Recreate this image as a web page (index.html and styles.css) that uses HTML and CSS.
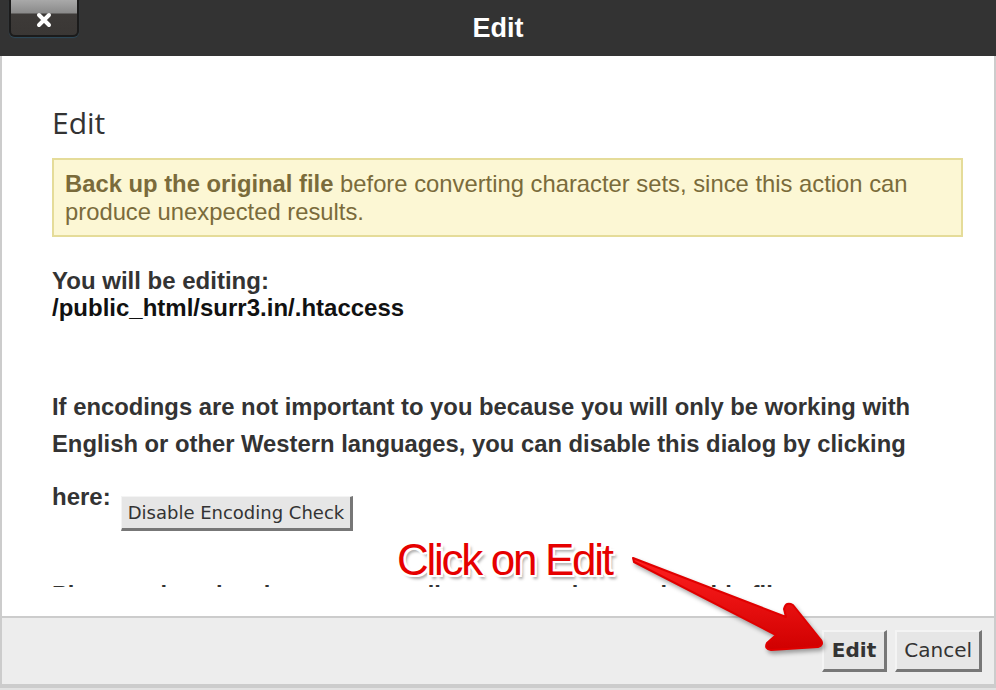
FILE: index.html
```html
<!DOCTYPE html>
<html lang="en">
<head>
<meta charset="utf-8">
<title>Edit</title>
<link rel="stylesheet" href="styles.css">
</head>
<body>
<div class="dialog">
  <header class="titlebar">
    <div class="close-cell">
      <div class="close-btn">
        <svg width="16" height="16" viewBox="0 0 16 16"><path d="M3 3 L13 13 M13 3 L3 13" stroke="#fff" stroke-width="4" stroke-linecap="round"/></svg>
      </div>
    </div>
    <h1 class="title">Edit</h1>
    <div></div>
  </header>
  <section class="content">
    <div class="scroll">
      <h2 class="heading">Edit</h2>
      <div class="warn"><strong>Back up the original file</strong> before converting character sets, since this action can produce unexpected results.</div>
      <p class="editing">You will be editing:<br><span class="path">/public_html/surr3.in/.htaccess</span></p>
      <p class="note">If encodings are not important to you because you will only be working with<br>English or other Western languages, you can disable this dialog by clicking</p>
      <div class="here-row"><span class="here">here:</span><button class="btn btn-small">Disable Encoding Check</button></div>
      <p class="note note-last">Please select the character encoding to use when saving this file.</p>
    </div>
  </section>
  <footer class="actions">
    <button class="btn btn-big btn-bold">Edit</button>
    <button class="btn btn-big btn-cancel">Cancel</button>
  </footer>
  <div class="below"></div>
</div>

<div class="callout">Click on Edit</div>
<svg class="arrow" width="996" height="690" viewBox="0 0 996 690">
  <defs>
    <linearGradient id="red" x1="0" y1="0" x2="0" y2="1">
      <stop offset="0" stop-color="#ff2020"/>
      <stop offset="1" stop-color="#d00000"/>
    </linearGradient>
  </defs>
  <path d="M633,558 L786,617 L784,609 Q786,601 793,605 L821,640 Q824,645 818,647 L771,650 Q764,649 767,643 L776,635 L634,562 Z" fill="url(#red)" stroke="#e00000" stroke-width="2" stroke-linejoin="round"/>
</svg>
</body>
</html>
```

FILE: styles.css
```css
* { box-sizing: border-box; }

html, body {
  margin: 0;
  padding: 0;
}

body {
  width: 996px;
  height: 690px;
  overflow: hidden;
  background: #e2e2e2;
  font-family: "Liberation Sans", Arial, sans-serif;
  position: relative;
}

.dialog {
  width: 996px;
  display: flex;
  flex-direction: column;
}

.titlebar {
  height: 56px;
  background: #333333;
  display: grid;
  grid-template-columns: 1fr auto 1fr;
  align-items: center;
}

.close-cell {
  align-self: start;
  padding-left: 9px;
}

.close-btn {
  width: 70px;
  height: 37px;
  border: 2px solid #1b1b1b;
  border-top: none;
  border-radius: 0 0 6px 6px;
  background: linear-gradient(to bottom, #a9a9a9 0, #8a8a8a 13px, #3d3a38 14px, #3a3735 100%);
  box-shadow: 0 1px 1px rgba(40, 90, 120, 0.6);
  display: flex;
  align-items: center;
  justify-content: center;
  padding-top: 4px;
}

.title {
  margin: 0;
  color: #ffffff;
  font-size: 27px;
  font-weight: bold;
  line-height: 56px;
}

.content {
  background: #ffffff;
  border-left: 2px solid #cccccc;
  border-right: 2px solid #cccccc;
  padding-bottom: 29px;
}

.scroll {
  height: 531px;
  overflow: hidden;
  padding: 47px 31px 0 50px;
}

.heading {
  margin: 0 0 15px;
  font-family: "Open Sans", "Liberation Sans", sans-serif;
  font-weight: normal;
  font-size: 30px;
  line-height: 40px;
  color: #333333;
}

.warn {
  background: #fcf7d4;
  border: 2px solid #e5dc99;
  padding: 10px 11px 9px;
  font-size: 23.8px;
  line-height: 28px;
  color: #7a6b3b;
}

.warn strong {
  font-weight: bold;
}

.editing {
  margin: 30px 0 0;
  font-size: 24px;
  line-height: 27px;
  font-weight: bold;
  color: #333333;
}

.path {
  color: #111111;
}

.note {
  margin: 67px 0 0;
  font-size: 23.8px;
  line-height: 37px;
  font-weight: bold;
  color: #333333;
}

.note-last {
  margin-top: 45px;
}

.here-row {
  margin-top: 23px;
  display: flex;
  align-items: flex-start;
  gap: 10px;
}

.here {
  font-size: 24px;
  line-height: 24px;
  font-weight: bold;
  color: #333333;
}

.btn {
  font-family: "DejaVu Sans", sans-serif;
  color: #333333;
  background: #e6e6e6;
  border-style: solid;
  border-color: #f4f4f4 #777777 #777777 #f4f4f4;
  border-radius: 0;
  margin: 0;
}

.btn-small {
  margin-top: 11px;
  font-size: 18px;
  line-height: 21px;
  height: 35px;
  border-width: 1px 3px 3px 1px;
  padding: 5px 6px;
}

.btn-big {
  font-size: 20px;
  line-height: 23px;
  height: 42px;
  border-width: 2px 3px 3px 2px;
  padding: 7px 8px;
}

.btn-bold {
  font-weight: bold;
}

.btn-cancel {
  padding: 7px 7px;
}

.actions {
  background: #ededed;
  border-top: 2px solid #cccccc;
  border-bottom: 4px solid #cccccc;
  border-left: 2px solid #cccccc;
  border-right: 2px solid #cccccc;
  padding: 12px 12px 12px 0;
  display: flex;
  justify-content: flex-end;
  gap: 8px;
}

.below {
  height: 2px;
  background: #e2e2e2;
}

.callout {
  position: absolute;
  left: 397px;
  top: 538px;
  font-family: "Liberation Sans", Arial, sans-serif;
  font-size: 44px;
  line-height: 44px;
  letter-spacing: -2.3px;
  color: #e60000;
  white-space: nowrap;
  text-shadow:
    2px 0 0 #fff, -2px 0 0 #fff, 0 2px 0 #fff, 0 -2px 0 #fff,
    2px 2px 0 #fff, -2px -2px 0 #fff, 2px -2px 0 #fff, -2px 2px 0 #fff,
    3px 4px 3px rgba(0, 0, 0, 0.35);
}

.arrow {
  position: absolute;
  left: 0;
  top: 0;
  pointer-events: none;
  filter: drop-shadow(2px 3px 2px rgba(0, 0, 0, 0.35));
}
```
